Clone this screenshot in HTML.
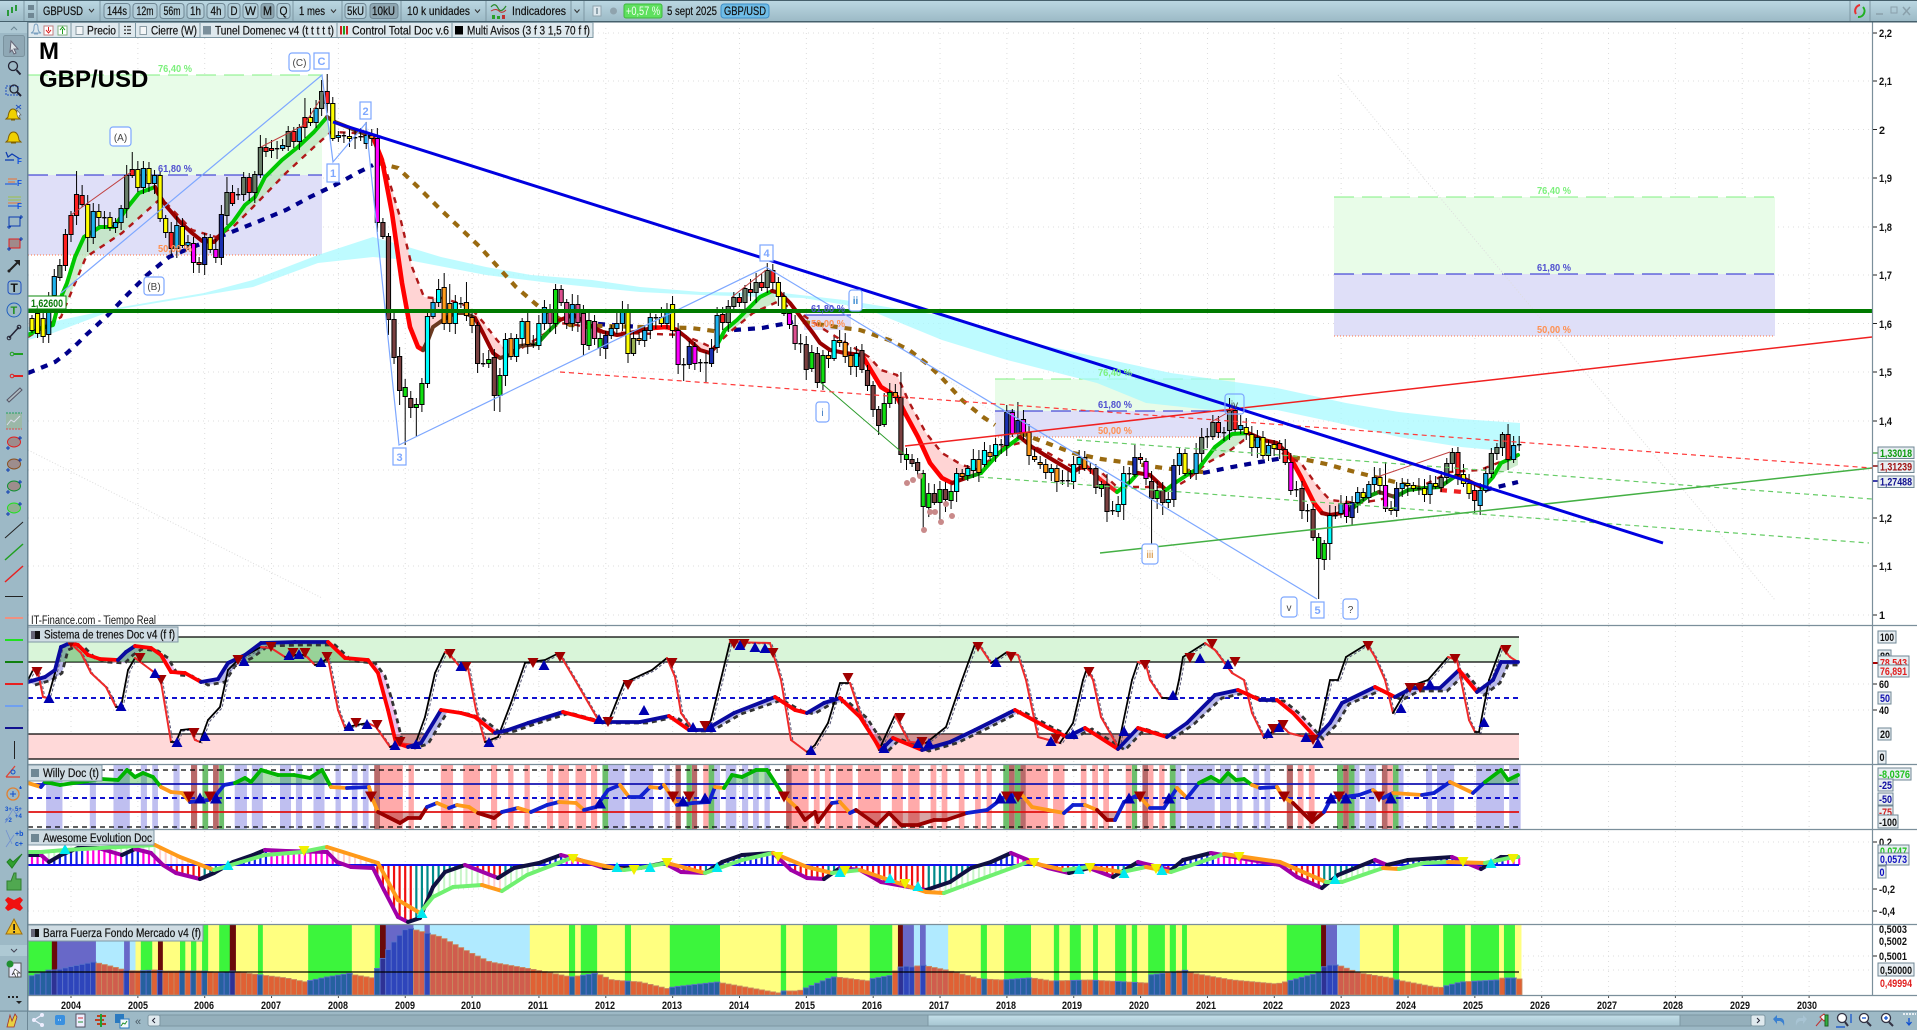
<!DOCTYPE html>
<html lang="es"><head><meta charset="utf-8"><title>GBPUSD</title>
<style>
html,body{margin:0;padding:0;background:#fff;overflow:hidden}
svg{display:block;font-family:"Liberation Sans",sans-serif}
text{fill:#111}
.a{font-size:11px;font-weight:bold;fill:#111}
.t{font-size:12px;fill:#111;stroke:#111;stroke-width:.2}
.l{font-size:11.5px;fill:#111;stroke:#111;stroke-width:.2}
.f{font-size:10px;font-weight:bold}
.bx{fill:#e8eef2;stroke:#6f8794;stroke-width:1}
.btn{fill:#b4cfda;stroke:#6f8794;stroke-width:1}
.on{fill:#8ea6b1;stroke:#6f8794;stroke-width:1}
.sep{stroke:#7d97a3;stroke-width:1}
.chip{fill:#cfdce3;stroke:#8098a4;stroke-width:1}
.lb{fill:#fff;stroke:#7da7ff;stroke-width:1.2}
.lt{font-size:11px;fill:#7da7ff;font-weight:bold;text-anchor:middle}
.ld{font-size:10px;fill:#444;text-anchor:middle}
</style></head><body>
<svg id="s" xmlns="http://www.w3.org/2000/svg" width="1917" height="1030" viewBox="0 0 1917 1030">
<defs>
<linearGradient id="tb" x1="0" y1="0" x2="0" y2="1"><stop offset="0" stop-color="#bcd8e3"/><stop offset="1" stop-color="#9bb9c5"/></linearGradient>
<linearGradient id="th" x1="0" y1="0" x2="0" y2="1"><stop offset="0" stop-color="#c4dfe9"/><stop offset="1" stop-color="#a6c5d1"/></linearGradient>
<clipPath id="cg"><rect x="28" y="764" width="1500" height="20"/></clipPath>
<clipPath id="cr"><rect x="28" y="812" width="1500" height="17"/></clipPath>
</defs>
<rect width="1917" height="1030" fill="#fff"/>
<g id="grid"></g>

<!-- fib boxes -->
<rect x="28" y="75" width="294" height="100" fill="#e8fce8"/><rect x="28" y="175" width="294" height="80" fill="#dfdff8"/>
<line x1="28" x2="322" y1="75" y2="75" stroke="#80f080" stroke-width="1" stroke-dasharray="20 8"/>
<line x1="28" x2="322" y1="175" y2="175" stroke="#2020d0" stroke-width="1" stroke-dasharray="20 8"/>
<line x1="28" x2="322" y1="255" y2="255" stroke="#ff7040" stroke-width="1" stroke-dasharray="1 2"/>
<rect x="804" y="315" width="47" height="15" fill="#dfdff8"/>
<line x1="804" x2="851" y1="315" y2="315" stroke="#2020d0"/>
<rect x="995" y="379" width="240" height="32" fill="#e8fce8"/><rect x="995" y="411" width="240" height="26" fill="#dfdff8"/>
<line x1="995" x2="1235" y1="379" y2="379" stroke="#80f080" stroke-dasharray="20 8"/>
<line x1="995" x2="1235" y1="411" y2="411" stroke="#2020d0" stroke-dasharray="20 8"/>
<line x1="995" x2="1235" y1="437" y2="437" stroke="#ff7040" stroke-dasharray="1 2"/>
<rect x="1334" y="197" width="441" height="77" fill="#e8fce8"/><rect x="1334" y="274" width="441" height="62" fill="#dfdff8"/>
<line x1="1334" x2="1775" y1="197" y2="197" stroke="#80f080" stroke-dasharray="20 8"/>
<line x1="1334" x2="1775" y1="274" y2="274" stroke="#2020d0" stroke-dasharray="20 8"/>
<line x1="1334" x2="1775" y1="336" y2="336" stroke="#ff7040" stroke-dasharray="1 2"/>

<!-- dotted diagonals -->
<line x1="1338" y1="75" x2="1775" y2="600" stroke="#ddd" stroke-dasharray="1 2"/>
<line x1="28" y1="450" x2="322" y2="598" stroke="#ddd" stroke-dasharray="1 2"/>
<line x1="840" y1="300" x2="1220" y2="580" stroke="#e4e4e4" stroke-dasharray="1 2"/>

<!-- cyan band -->
<polygon fill="#a8faff" fill-opacity=".75" points="28,327 122,307 204,293 253,280 318,255 373,237 408,247 441,257 486,267 531,275 592,280 640,287 701,292 783,293 844,300 893,308 938,315 1020,340 1097,357 1171,373 1277,388 1346,403 1399,412 1461,419 1520,423 1520,447 1493,450 1461,447 1399,437 1338,423 1277,410 1211,410 1146,403 1097,383 1007,360 942,340 864,308 803,298 701,295 640,292 551,283 486,275 408,260 373,257 318,263 253,287 114,310 53,333 28,340"/>

<!-- MA fills -->
<g fill="#ffd4d4">
<polygon points="373,137 382,160 392,213 402,283 410,327 418,347 423,350 433,327 443,320 443,298 433,298 424,297 412,267 400,217 382,157"/>
<polygon points="475,318 483,333 493,353 500,358 510,355 497,340 483,322 470,307"/>
<polygon points="660,328 687,338 700,350 710,353 713,348 700,342 683,335"/>
<polygon points="862,355 869,367 881,387 897,397 905,413 918,437 930,463 942,478 952,483 966,478 979,470 962,465 942,453 926,433 909,402 897,375 881,370 869,357"/>
<polygon points="1101,480 1117,492 1117,487 1101,472"/>
<polygon points="1289,455 1301,477 1314,503 1322,513 1330,515 1348,502 1330,500 1318,487 1301,463"/>
</g>
<g fill="#bfe6bf" fill-opacity=".8">
<polygon points="59,302 67,283 75,257 84,237 100,227 114,227 127,208 139,193 155,187 159,200 122,233 86,257 61,317"/>
<polygon points="233,222 245,205 255,197 265,177 282,160 298,147 314,132 327,117 331,132 314,147 286,173 253,207 233,227"/>
<polygon points="725,330 737,320 747,310 760,297 772,291 777,302 753,313 730,332"/>
<polygon points="981,473 999,453 1020,437 1024,442 1003,447 979,470"/>
<polygon points="1215,447 1232,434 1248,433 1244,440 1228,452 1207,463"/>
<polygon points="1501,463 1518,455 1518,465 1493,477"/>
</g>
<!-- long MA dashed -->
<g fill="none" stroke-width="4.2" stroke-dasharray="7 7">
<polyline stroke="#00008c" points="28,373 43,367 55,362 67,353 78,343 86,335 108,315 127,295 147,275 169,257 190,248 229,233 257,222 286,210 310,197 335,185 359,172 373,165"/>
<polyline stroke="#00008c" points="598,324 640,327"/>
<polyline stroke="#00008c" points="734,330 762,328 793,322"/>
<polyline stroke="#00008c" points="1203,473 1232,467 1260,462 1289,457"/>
<polyline stroke="#00008c" points="1485,490 1518,482"/>
<polyline stroke="#9a6a10" points="378,163 398,168 418,187 439,208 459,227 480,247 498,267 516,287 538,306 570,325 640,327 691,328 707,330 720,332"/>
<polyline stroke="#9a6a10" points="803,322 844,328 860,330 889,340 909,350 926,363 942,378 962,400 983,417 995,425"/>
<polyline stroke="#9a6a10" points="1020,433 1044,442 1073,453 1101,459 1130,463 1156,467 1179,470 1203,472"/>
<polyline stroke="#9a6a10" points="1293,457 1326,464 1355,472 1367,475 1395,482 1420,488"/>
<polyline stroke="#ee2222" points="1440,490 1462,492"/>
</g>
<!-- slow MA -->
<g fill="none" stroke="#b01818" stroke-width="2.4" stroke-dasharray="6 6">
<polyline points="28,337 61,317 86,257 122,233 159,200 163,200 192,230 216,237 233,227 253,207 286,173 314,147 331,132 355,133 373,140 382,157 400,217 412,267 424,297 433,298 443,298 470,307 483,322 497,340 510,355 540,337 560,323 577,325 600,332 683,335 700,342 713,348 730,332 753,313 777,302 790,307 800,313 820,327 869,357 881,370 897,375 909,402 926,433 942,453 962,465 979,470 1003,447 1024,442 1048,453 1073,467 1101,472 1117,487 1175,487 1187,480 1207,463 1228,452 1244,440 1264,440 1285,455 1301,463 1318,487 1330,500 1348,502 1358,503 1379,500 1395,495 1420,487 1450,472 1480,470 1518,455"/>
</g>
<g id="fast" fill="none" stroke-linejoin="round" stroke-linecap="round"></g>
<g id="cnd"></g>
<!-- pink dots -->
<g fill="#c98a8a">
<circle cx="907" cy="483" r="3"/><circle cx="913" cy="480" r="3"/><circle cx="920" cy="476" r="3"/><circle cx="924" cy="530" r="3"/><circle cx="930" cy="512" r="3"/><circle cx="935" cy="512" r="3"/><circle cx="941" cy="522" r="3"/><circle cx="946" cy="504" r="3"/><circle cx="952" cy="516" r="3"/>
</g>
<!-- small red lines -->
<g fill="none" stroke="#c04040" stroke-width="1">
<polyline points="71,215 131,172"/><polyline points="261,147 304,125 320,100"/><polyline points="732,297 766,270"/><polyline points="1377,477 1450,452"/><polyline points="1211,422 1236,408"/>
</g>
<!-- trend lines -->
<g fill="none">
<polyline stroke="#7da7ff" stroke-width="1.2" points="61,293 322,75 333,162 366,123 399,445 766,267 1317,599"/>
<line x1="820" y1="382" x2="905" y2="455" stroke="#2a9a2a" stroke-width="1"/>
<line x1="979" y1="477" x2="1869" y2="543" stroke="#66cc66" stroke-width="1.2" stroke-dasharray="5 4"/>
<line x1="1077" y1="440" x2="1872" y2="499" stroke="#66cc66" stroke-width="1.2" stroke-dasharray="5 4"/>
<line x1="1100" y1="553" x2="1872" y2="468" stroke="#44b044" stroke-width="1.5"/>
<line x1="560" y1="372" x2="1872" y2="468" stroke="#ff3a3a" stroke-width="1.2" stroke-dasharray="5 4"/>
<line x1="905" y1="446" x2="1872" y2="337" stroke="#f02020" stroke-width="1.5"/>
<line x1="333" y1="122" x2="1663" y2="543" stroke="#0000e0" stroke-width="3"/>
<rect x="28" y="309" width="1844" height="4" fill="#007a00"/>
</g>
<!-- big text -->
<text x="39" y="59" font-size="24" font-weight="bold" style="fill:#000">M</text>
<text x="39" y="87" font-size="24" font-weight="bold" style="fill:#000">GBP/USD</text>
<!-- fib labels -->
<g class="f">
<text class="f" x="158" y="72" textLength="34" lengthAdjust="spacingAndGlyphs" style="fill:#7cf07c">76,40 %</text>
<text class="f" x="158" y="172" textLength="34" lengthAdjust="spacingAndGlyphs" style="fill:#5050d0">61,80 %</text>
<text class="f" x="158" y="252" textLength="34" lengthAdjust="spacingAndGlyphs" style="fill:#ff9050">50,00 %</text>
<text class="f" x="811" y="312" textLength="34" lengthAdjust="spacingAndGlyphs" style="fill:#5050d0">61,80 %</text>
<text class="f" x="811" y="327" textLength="34" lengthAdjust="spacingAndGlyphs" style="fill:#ff9050">50,00 %</text>
<text class="f" x="1098" y="376" textLength="34" lengthAdjust="spacingAndGlyphs" style="fill:#7cf07c">76,40 %</text>
<text class="f" x="1098" y="408" textLength="34" lengthAdjust="spacingAndGlyphs" style="fill:#5050d0">61,80 %</text>
<text class="f" x="1098" y="434" textLength="34" lengthAdjust="spacingAndGlyphs" style="fill:#ff9050">50,00 %</text>
<text class="f" x="1537" y="194" textLength="34" lengthAdjust="spacingAndGlyphs" style="fill:#7cf07c">76,40 %</text>
<text class="f" x="1537" y="271" textLength="34" lengthAdjust="spacingAndGlyphs" style="fill:#5050d0">61,80 %</text>
<text class="f" x="1537" y="333" textLength="34" lengthAdjust="spacingAndGlyphs" style="fill:#ff9050">50,00 %</text>
</g>
<!-- elliott labels -->
<rect class="lb" x="289" y="53" width="21" height="18" rx="3"/><text class="ld" x="299.5" y="66">(C)</text>
<rect class="lb" x="314" y="53" width="15" height="16"/><text class="lt" x="321.5" y="65">C</text>
<rect class="lb" x="110" y="127" width="21" height="19" rx="3"/><text class="ld" x="120.5" y="141">(A)</text>
<rect class="lb" x="144" y="277" width="20" height="18" rx="3"/><text class="ld" x="154" y="290">(B)</text>
<rect class="lb" x="327" y="164" width="12" height="18"/><text class="lt" x="333" y="177">1</text>
<rect class="lb" x="360" y="102" width="11" height="17"/><text class="lt" x="365.5" y="115">2</text>
<rect class="lb" x="393" y="448" width="13" height="17"/><text class="lt" x="399.5" y="461">3</text>
<rect class="lb" x="760" y="245" width="13" height="16"/><text class="lt" x="766.5" y="257">4</text>
<rect class="lb" x="1311" y="602" width="13" height="16"/><text class="lt" x="1317.5" y="614">5</text>
<rect class="lb" x="849" y="290" width="13" height="21" rx="3"/><text class="lt" x="855.5" y="304" style="font-size:10px;fill:#3a8ad0">ii</text>
<rect class="lb" x="816" y="402" width="13" height="20" rx="3"/><text class="ld" x="822.5" y="416" style="fill:#3a7ac0">i</text>
<rect class="lb" x="1142" y="544" width="16" height="20" rx="3"/><text class="ld" x="1150" y="558" style="fill:#d08020">iii</text>
<rect class="lb" x="1225" y="394" width="19" height="20" rx="3" style="fill:none"/><text class="ld" x="1234.5" y="408">iv</text>
<rect class="lb" x="1281" y="597" width="16" height="20" rx="3"/><text class="ld" x="1289" y="611">v</text>
<rect class="lb" x="1343" y="599" width="15" height="20" rx="3"/><text class="ld" x="1350.5" y="613">?</text>
<!-- 1,62600 tag -->
<rect x="28" y="296" width="38" height="13" fill="#fff" stroke="#0a8a0a"/><text x="31" y="307" class="a" textLength="32" lengthAdjust="spacingAndGlyphs" style="fill:#0a7a0a">1,62600</text>
<text x="31" y="624" font-size="11.5" textLength="125" lengthAdjust="spacingAndGlyphs">IT-Finance.com - Tiempo Real</text>

<!-- sub panels -->
<rect x="28" y="625.5" width="1845" height="370" fill="#fff"/>
<g id="grid2"></g>
<rect x="28" y="637" width="1491" height="25" fill="#d9f5d9"/>
<rect x="28" y="734" width="1491" height="25" fill="#ffd9d9"/>
<g id="sys"></g>
<g id="wil"></g>
<g id="awe"></g>
<g id="bar"></g>

<!-- panel separators + axis -->
<g stroke="#7b8f9b" stroke-width="1.2">
<line x1="28" x2="1917" y1="625.5" y2="625.5"/><line x1="28" x2="1917" y1="764.5" y2="764.5"/><line x1="28" x2="1917" y1="829.5" y2="829.5"/><line x1="28" x2="1917" y1="924.5" y2="924.5"/><line x1="28" x2="1917" y1="995.5" y2="995.5"/><line x1="1872.5" x2="1872.5" y1="22" y2="995"/>
</g>
<!-- years -->
<g class="a" id="yrs">
<text class="a" x="61" y="1009" textLength="20" lengthAdjust="spacingAndGlyphs">2004</text>
<text class="a" x="128" y="1009" textLength="20" lengthAdjust="spacingAndGlyphs">2005</text>
<text class="a" x="194" y="1009" textLength="20" lengthAdjust="spacingAndGlyphs">2006</text>
<text class="a" x="261" y="1009" textLength="20" lengthAdjust="spacingAndGlyphs">2007</text>
<text class="a" x="328" y="1009" textLength="20" lengthAdjust="spacingAndGlyphs">2008</text>
<text class="a" x="395" y="1009" textLength="20" lengthAdjust="spacingAndGlyphs">2009</text>
<text class="a" x="461" y="1009" textLength="20" lengthAdjust="spacingAndGlyphs">2010</text>
<text class="a" x="528" y="1009" textLength="20" lengthAdjust="spacingAndGlyphs">2011</text>
<text class="a" x="595" y="1009" textLength="20" lengthAdjust="spacingAndGlyphs">2012</text>
<text class="a" x="662" y="1009" textLength="20" lengthAdjust="spacingAndGlyphs">2013</text>
<text class="a" x="729" y="1009" textLength="20" lengthAdjust="spacingAndGlyphs">2014</text>
<text class="a" x="795" y="1009" textLength="20" lengthAdjust="spacingAndGlyphs">2015</text>
<text class="a" x="862" y="1009" textLength="20" lengthAdjust="spacingAndGlyphs">2016</text>
<text class="a" x="929" y="1009" textLength="20" lengthAdjust="spacingAndGlyphs">2017</text>
<text class="a" x="996" y="1009" textLength="20" lengthAdjust="spacingAndGlyphs">2018</text>
<text class="a" x="1062" y="1009" textLength="20" lengthAdjust="spacingAndGlyphs">2019</text>
<text class="a" x="1129" y="1009" textLength="20" lengthAdjust="spacingAndGlyphs">2020</text>
<text class="a" x="1196" y="1009" textLength="20" lengthAdjust="spacingAndGlyphs">2021</text>
<text class="a" x="1263" y="1009" textLength="20" lengthAdjust="spacingAndGlyphs">2022</text>
<text class="a" x="1330" y="1009" textLength="20" lengthAdjust="spacingAndGlyphs">2023</text>
<text class="a" x="1396" y="1009" textLength="20" lengthAdjust="spacingAndGlyphs">2024</text>
<text class="a" x="1463" y="1009" textLength="20" lengthAdjust="spacingAndGlyphs">2025</text>
<text class="a" x="1530" y="1009" textLength="20" lengthAdjust="spacingAndGlyphs">2026</text>
<text class="a" x="1597" y="1009" textLength="20" lengthAdjust="spacingAndGlyphs">2027</text>
<text class="a" x="1663" y="1009" textLength="20" lengthAdjust="spacingAndGlyphs">2028</text>
<text class="a" x="1730" y="1009" textLength="20" lengthAdjust="spacingAndGlyphs">2029</text>
<text class="a" x="1797" y="1009" textLength="20" lengthAdjust="spacingAndGlyphs">2030</text>
</g>
<!-- axis labels -->
<g stroke="#222" stroke-width="1" id="ticks">
<path d="M1873 33h4M1873 81h4M1873 129.5h4M1873 178h4M1873 227h4M1873 275h4M1873 323.5h4M1873 372h4M1873 421h4M1873 518h4M1873 566h4M1873 615h4M1873 684h4M1873 710h4M1873 842h4M1873 889h4M1873 911h4M1873 956h4"/>
</g>
<g>
<text class="a" x="1879" y="37" textLength="13" lengthAdjust="spacingAndGlyphs">2,2</text>
<text class="a" x="1879" y="85" textLength="13" lengthAdjust="spacingAndGlyphs">2,1</text>
<text class="a" x="1879" y="134" textLength="6" lengthAdjust="spacingAndGlyphs">2</text>
<text class="a" x="1879" y="182" textLength="13" lengthAdjust="spacingAndGlyphs">1,9</text>
<text class="a" x="1879" y="231" textLength="13" lengthAdjust="spacingAndGlyphs">1,8</text>
<text class="a" x="1879" y="279" textLength="13" lengthAdjust="spacingAndGlyphs">1,7</text>
<text class="a" x="1879" y="328" textLength="13" lengthAdjust="spacingAndGlyphs">1,6</text>
<text class="a" x="1879" y="376" textLength="13" lengthAdjust="spacingAndGlyphs">1,5</text>
<text class="a" x="1879" y="425" textLength="13" lengthAdjust="spacingAndGlyphs">1,4</text>
<text class="a" x="1879" y="522" textLength="13" lengthAdjust="spacingAndGlyphs">1,2</text>
<text class="a" x="1879" y="570" textLength="13" lengthAdjust="spacingAndGlyphs">1,1</text>
<text class="a" x="1879" y="619" textLength="6" lengthAdjust="spacingAndGlyphs">1</text>

<path d="M1873 453h5" stroke="#0a8a0a"/><path d="M1873 466h5" stroke="#8a0a0a" stroke-width="1.5"/><path d="M1873 481h5" stroke="#000090" stroke-width="1.5"/>
<rect class="bx" x="1878" y="447" width="36" height="11.5"/><text class="a" x="1880" y="457" textLength="32" lengthAdjust="spacingAndGlyphs" style="fill:#0a9a0a">1,33018</text>
<rect class="bx" x="1878" y="461" width="36" height="11.5"/><text class="a" x="1880" y="470.5" textLength="32" lengthAdjust="spacingAndGlyphs" style="fill:#a01010">1,31239</text>
<rect class="bx" x="1878" y="476" width="36" height="11.5"/><text class="a" x="1880" y="485.5" textLength="32" lengthAdjust="spacingAndGlyphs" style="fill:#101090">1,27488</text>

<rect class="bx" x="1878" y="631" width="18" height="12"/><text class="a" x="1880" y="641" textLength="14" lengthAdjust="spacingAndGlyphs">100</text>
<rect class="bx" x="1878" y="650" width="13" height="12"/><text class="a" x="1880" y="660" textLength="10" lengthAdjust="spacingAndGlyphs">80</text>
<path d="M1873 663h5" stroke="#a00" stroke-width="2"/>
<rect class="bx" x="1878" y="656" width="31" height="12"/><text class="a" x="1880" y="666.5" textLength="27" lengthAdjust="spacingAndGlyphs" style="fill:#e02020">78,543</text>
<rect class="bx" x="1878" y="665" width="31" height="12"/><text class="a" x="1880" y="675" textLength="27" lengthAdjust="spacingAndGlyphs" style="fill:#e02020">76,891</text>
<text class="a" x="1879" y="688" textLength="10" lengthAdjust="spacingAndGlyphs">60</text>
<rect class="bx" x="1878" y="692" width="13" height="12"/><text class="a" x="1880" y="702" textLength="10" lengthAdjust="spacingAndGlyphs" style="fill:#1010b0">50</text>
<text class="a" x="1879" y="714" textLength="10" lengthAdjust="spacingAndGlyphs">40</text>
<rect class="bx" x="1878" y="728" width="13" height="12"/><text class="a" x="1880" y="738" textLength="10" lengthAdjust="spacingAndGlyphs">20</text>
<rect class="bx" x="1878" y="751" width="8" height="13"/><text class="a" x="1879.5" y="761" textLength="5" lengthAdjust="spacingAndGlyphs">0</text>

<rect class="bx" x="1878" y="768" width="33" height="12"/><text class="a" x="1879" y="778" textLength="31" lengthAdjust="spacingAndGlyphs" style="fill:#20c020">-8,0376</text>
<rect class="bx" x="1878" y="779" width="15" height="12"/><text class="a" x="1879" y="789" textLength="13" lengthAdjust="spacingAndGlyphs" style="fill:#1010a0">-25</text>
<rect class="bx" x="1878" y="793" width="15" height="12"/><text class="a" x="1879" y="803" textLength="13" lengthAdjust="spacingAndGlyphs" style="fill:#1010a0">-50</text>
<rect class="bx" x="1878" y="806" width="15" height="12"/><text class="a" x="1879" y="816" textLength="13" lengthAdjust="spacingAndGlyphs" style="fill:#d02020">-75</text>
<rect class="bx" x="1878" y="815" width="20" height="13"/><text class="a" x="1879" y="826" textLength="18" lengthAdjust="spacingAndGlyphs">-100</text>

<text class="a" x="1879" y="846" textLength="13" lengthAdjust="spacingAndGlyphs">0,2</text>
<rect class="bx" x="1878" y="845" width="31" height="11"/><text class="a" x="1880" y="855" textLength="27" lengthAdjust="spacingAndGlyphs" style="fill:#20c020">0,0747</text>
<rect class="bx" x="1878" y="853" width="31" height="12"/><text class="a" x="1880" y="863" textLength="27" lengthAdjust="spacingAndGlyphs" style="fill:#1010c0">0,0573</text>
<rect class="bx" x="1878" y="866" width="8" height="12"/><text class="a" x="1879.5" y="876" textLength="5" lengthAdjust="spacingAndGlyphs" style="fill:#1010c0">0</text>
<text class="a" x="1879" y="893" textLength="16" lengthAdjust="spacingAndGlyphs">-0,2</text>
<text class="a" x="1879" y="915" textLength="16" lengthAdjust="spacingAndGlyphs">-0,4</text>

<text class="a" x="1879" y="933" textLength="28" lengthAdjust="spacingAndGlyphs">0,5003</text>
<text class="a" x="1879" y="945" textLength="28" lengthAdjust="spacingAndGlyphs">0,5002</text>
<text class="a" x="1879" y="960" textLength="28" lengthAdjust="spacingAndGlyphs">0,5001</text>
<rect class="bx" x="1878" y="963" width="36" height="13"/><text class="a" x="1880" y="974" textLength="32" lengthAdjust="spacingAndGlyphs">0,50000</text>
<text class="a" x="1880" y="987" textLength="32" lengthAdjust="spacingAndGlyphs" style="fill:#e02020">0,49994</text>
</g>

<!-- panel chips -->
<rect class="chip" x="28" y="627" width="150" height="15"/><rect x="31" y="631" width="4" height="8" fill="#667"/><rect x="35" y="631" width="5" height="8" fill="#111"/>
<text class="l" x="44" y="638.5" textLength="131" lengthAdjust="spacingAndGlyphs">Sistema de trenes Doc v4 (f f)</text>
<rect class="chip" x="28" y="765" width="74" height="16"/><rect x="31" y="769" width="8" height="8" fill="#6f8794"/>
<text class="l" x="43" y="777" textLength="56" lengthAdjust="spacingAndGlyphs">Willy Doc (t)</text>
<rect class="chip" x="28" y="830" width="126" height="15"/><rect x="31" y="834" width="8" height="8" fill="#6f8794"/>
<text class="l" x="43" y="842" textLength="109" lengthAdjust="spacingAndGlyphs">Awesome Evolution Doc</text>
<rect class="chip" x="28" y="925" width="175" height="16"/><rect x="31" y="929" width="4" height="8" fill="#667"/><rect x="35" y="929" width="4" height="8" fill="#111"/>
<text class="l" x="43" y="937" textLength="158" lengthAdjust="spacingAndGlyphs">Barra Fuerza Fondo Mercado v4 (f)</text>

<!-- top toolbar -->
<rect x="0" y="0" width="1917" height="22" fill="url(#tb)"/>
<rect x="0" y="0" width="1917" height="1" fill="#46606c"/><rect x="0" y="21" width="1917" height="1.5" fill="#46606c"/>
<g fill="#2a9a3a"><rect x="7" y="10" width="2" height="6"/><rect x="11" y="7" width="2" height="6"/><rect x="15" y="5" width="2" height="6"/></g>
<path class="sep" d="M24 1V21"/>
<g fill="#6f8794"><rect x="28" y="5" width="6" height="5"/><rect x="28" y="13" width="6" height="5"/></g>
<path class="sep" d="M37 1V21"/>
<text class="t" x="43" y="15" textLength="40" lengthAdjust="spacingAndGlyphs">GBPUSD</text>
<path d="M89 9l2.5 3 2.5-3" fill="none" stroke="#333"/>
<path class="sep" d="M100 1V21"/>
<rect class="btn" x="104" y="3.5" width="26" height="15" rx="3"/><text class="t" x="107" y="15" textLength="20" lengthAdjust="spacingAndGlyphs">144s</text>
<rect class="btn" x="133" y="3.5" width="24" height="15" rx="3"/><text class="t" x="136.5" y="15" textLength="17" lengthAdjust="spacingAndGlyphs">12m</text>
<rect class="btn" x="160" y="3.5" width="24" height="15" rx="3"/><text class="t" x="163.5" y="15" textLength="17" lengthAdjust="spacingAndGlyphs">56m</text>
<rect class="btn" x="187" y="3.5" width="17" height="15" rx="3"/><text class="t" x="190" y="15" textLength="11" lengthAdjust="spacingAndGlyphs">1h</text>
<rect class="btn" x="207" y="3.5" width="18" height="15" rx="3"/><text class="t" x="210.5" y="15" textLength="11" lengthAdjust="spacingAndGlyphs">4h</text>
<rect class="btn" x="228" y="3.5" width="12" height="15" rx="3"/><text class="t" x="230.5" y="15" textLength="7" lengthAdjust="spacingAndGlyphs">D</text>
<rect class="btn" x="243" y="3.5" width="15" height="15" rx="3"/><text class="t" x="245" y="15" textLength="11" lengthAdjust="spacingAndGlyphs">W</text>
<rect class="on" x="261" y="3.5" width="13" height="15" rx="3"/><text class="t" x="263" y="15" textLength="9" lengthAdjust="spacingAndGlyphs">M</text>
<rect class="btn" x="277" y="3.5" width="13" height="15" rx="3"/><text class="t" x="279.5" y="15" textLength="8" lengthAdjust="spacingAndGlyphs">Q</text>
<path class="sep" d="M293 1V21"/>
<text class="t" x="299" y="15" textLength="26" lengthAdjust="spacingAndGlyphs">1 mes</text>
<path d="M331 9.5l2.5 3 2.5-3" fill="none" stroke="#333"/>
<path class="sep" d="M342 1V21"/>
<rect class="btn" x="345" y="3.5" width="21" height="15" rx="3"/><text class="t" x="347" y="15" textLength="17" lengthAdjust="spacingAndGlyphs">5kU</text>
<rect class="on" x="370" y="3.5" width="28" height="15" rx="3"/><text class="t" x="372" y="15" textLength="23" lengthAdjust="spacingAndGlyphs">10kU</text>
<path class="sep" d="M401 1V21"/>
<text class="t" x="407" y="15" textLength="63" lengthAdjust="spacingAndGlyphs">10 k unidades</text>
<path d="M475 9.5l2.5 3 2.5-3" fill="none" stroke="#333"/>
<path class="sep" d="M486 1V21"/>
<path d="M491 7q4-5 7 1t8-2" fill="none" stroke="#2a8a2a" stroke-width="1.2"/><path d="M491 11q5-3 8 0t7-1" fill="none" stroke="#c03030" stroke-width="1"/>
<g fill="#2aa02a"><rect x="492" y="15" width="3" height="4"/><rect x="497" y="16" width="3" height="3"/></g><rect x="502" y="15" width="3" height="4" fill="#c03030"/>
<text class="t" x="512" y="15" textLength="54" lengthAdjust="spacingAndGlyphs">Indicadores</text>
<path class="sep" d="M571 1V21"/><path d="M574.5 9.5l2.5 3 2.5-3" fill="none" stroke="#333"/><path class="sep" d="M584 1V21"/>
<rect x="593" y="6" width="8" height="10" fill="#dde8ee" stroke="#8fa3ad"/><rect x="596" y="8" width="2" height="6" fill="#8fa3ad"/>
<circle cx="613.5" cy="11" r="3.5" fill="#8fa3ad"/>
<rect x="624" y="4" width="38" height="14" rx="2" fill="#5fe05f" stroke="#3fb83f"/>
<text class="t" x="626" y="15" textLength="34" lengthAdjust="spacingAndGlyphs" style="fill:#f4fff4;stroke:none">+0,57 %</text>
<text class="t" x="667" y="15" textLength="50" lengthAdjust="spacingAndGlyphs">5 sept 2025</text>
<rect x="721" y="4" width="48" height="14" rx="3" fill="#6fbce6" stroke="#3f8fc8"/>
<text class="t" x="724" y="15" textLength="42" lengthAdjust="spacingAndGlyphs">GBP/USD</text>
<path class="sep" d="M1850 1V21M1870 1V21"/>
<path d="M1860 5a6 6 0 0 0-4 9" fill="none" stroke="#e83030" stroke-width="2"/><path d="M1858 17a6 6 0 0 0 5-10" fill="none" stroke="#20b020" stroke-width="2"/>
<path d="M1876 14h7" stroke="#8aa0ab" stroke-width="1.5"/><rect x="1891" y="7" width="6" height="6" fill="none" stroke="#8aa0ab"/><path d="M1903 7l7 8M1910 7l-7 8" stroke="#8aa0ab" stroke-width="1.5"/>

<!-- legend row -->
<rect x="28" y="22.5" width="565" height="15" fill="#dfe9ee" stroke="#7d97a3" stroke-width="1"/>
<path d="M31 33q3-1 3-5t2-4 2 4 3 5zM34 34h4" fill="none" stroke="#7aa0c0"/>
<rect x="44" y="26" width="9" height="9" fill="#fff" stroke="#c08080"/><path d="M48.5 27v4M46 30l2.5 3 2.5-3" stroke="#e02020" fill="none"/>
<rect x="58" y="26" width="9" height="9" fill="#fff" stroke="#80b080"/><path d="M62.5 34v-5M60 30l2.5-3 2.5 3" stroke="#20a020" fill="none"/>
<path class="sep" d="M71 23V37M119 23V37M135.5 23V37M200 23V37M337 23V37M452 23V37"/>
<rect x="76" y="26.5" width="7" height="8" fill="#f4f6f7" stroke="#8a9aa3"/>
<text class="l" x="87" y="34.5" textLength="29" lengthAdjust="spacingAndGlyphs">Precio</text>
<path d="M124 26.5h2M127 26.5h4M124 30h2M127 30h4M124 33.5h2M127 33.5h4" stroke="#333" stroke-width="1.2"/>
<rect x="140" y="26.5" width="6.5" height="8" fill="#f4f6f7" stroke="#8a9aa3"/>
<text class="l" x="151" y="34.5" textLength="46" lengthAdjust="spacingAndGlyphs">Cierre (W)</text>
<rect x="203" y="26" width="8" height="8.5" fill="#7b8f9b"/>
<text class="l" x="215" y="34.5" textLength="119" lengthAdjust="spacingAndGlyphs">Tunel Domenec v4 (t t t t t)</text>
<rect x="340" y="26" width="2" height="8.5" fill="#d02020"/><rect x="343" y="26" width="2" height="8.5" fill="#20a020"/><rect x="346" y="26" width="2" height="8.5" fill="#d02020"/>
<text class="l" x="352" y="34.5" textLength="97" lengthAdjust="spacingAndGlyphs">Control Total Doc v.6</text>
<rect x="455" y="26" width="8" height="8.5" fill="#000"/>
<text class="l" x="467" y="34.5" textLength="123" lengthAdjust="spacingAndGlyphs">Multi Avisos (3 f 3 1,5 70 f f)</text>

<!-- left toolbar -->
<rect x="0" y="22" width="28" height="1008" fill="#9db9c6"/><rect x="27" y="22" width="1.5" height="1008" fill="#6c8795"/>
<rect x="0" y="22" width="27" height="11" fill="#aec9d4"/><path d="M11 30l3-3 3 3" fill="none" stroke="#6c8795"/>
<rect x="3.5" y="35.5" width="21" height="21" rx="2" fill="#8fa8b5" stroke="#7a929e"/>
<path d="M11 41l7 8h-4l2 4-2 1-2-4-2 2z" fill="#dfe6ea" stroke="#667"/>
<g fill="none" stroke="#223">
<circle cx="13" cy="66" r="4.5" stroke-width="1.3"/><path d="M16.5 70l4 4.5" stroke-width="2"/>
<rect x="6" y="86" width="12" height="9" stroke="#2050c0" stroke-dasharray="2 1"/><circle cx="14" cy="89" r="4" stroke-width="1.3"/><path d="M17 92l4 4" stroke-width="2"/>
</g>
<path d="M8 117q1-8 5-8t5 8l2 2H6zM11 120h4" fill="#f0d000" stroke="#806000"/><path d="M16 105l5 4M21 105l-5 4" stroke="#2050c0"/><path d="M17 110l4 5-2 0 1 3-1 0-2-3z" fill="#fff" stroke="#555" stroke-width=".6"/>
<path d="M8 140q1-8 5.5-8t5.5 8l2 2H6zM11 143h5" fill="#f0d000" stroke="#806000"/>
<path d="M6 152l2 5 4-3 8 5M5 160h9" fill="none" stroke="#0a3ab0" stroke-width="1.2"/><text x="17" y="164" font-size="8" font-weight="bold" style="fill:#1050e0">F</text>
<path d="M8 179h9M8 182h7" stroke="#e08050" stroke-width="1.2"/><path d="M5 184h12" stroke="#1050e0"/><text x="17" y="186" font-size="8" font-weight="bold" style="fill:#1050e0">F</text>
<path d="M8 197h13M8 200h13" stroke="#a0c060" stroke-width="1.2"/><path d="M8 203h13" stroke="#e08050" stroke-width="1.2"/><path d="M8 206h10" stroke="#1050e0"/><text x="17" y="209" font-size="8" font-weight="bold" style="fill:#1050e0">F</text>
<rect x="9" y="217" width="11" height="9" fill="none" stroke="#0a3ab0"/><path d="M7 227h4M9 225v4M19 217h4M21 215v4" stroke="#0a3ab0"/>
<rect x="9" y="239" width="11" height="9" fill="#a08a8a" stroke="#e02020"/><path d="M7 249h4M9 247v4M19 239h4M21 237v4" stroke="#0a3ab0"/>
<path d="M9 271l10-10" stroke="#222" stroke-width="2"/><path d="M14 260h6v6z" fill="#222"/><circle cx="9" cy="271" r="1.5" fill="#222"/>
<rect x="8" y="281" width="13" height="13" rx="3" fill="none" stroke="#2050c0"/><text x="10.5" y="292" font-size="12" font-weight="bold" style="fill:#111">T</text>
<circle cx="14" cy="310" r="7" fill="none" stroke="#2060c0"/><text x="10.5" y="314" font-size="11" font-weight="bold" style="fill:#209020">T</text>
<path d="M9 338l10-11" stroke="#223" stroke-width="1.5"/><circle cx="9" cy="338" r="1.8" fill="none" stroke="#223"/><circle cx="19" cy="327" r="1.8" fill="none" stroke="#223"/>
<path d="M11 354h12" stroke="#20a020" stroke-width="2"/><circle cx="12" cy="354" r="1.8" fill="#9db9c6" stroke="#20a020"/>
<path d="M11 376h12" stroke="#e02020" stroke-width="2"/><circle cx="12" cy="376" r="1.8" fill="#9db9c6" stroke="#e02020"/>
<path d="M7 400l13-12 2 2-13 12z" fill="#b0bcc2" stroke="#556"/>
<rect x="6" y="413" width="16" height="16" fill="#9bb8a8" /><path d="M6 413h16" stroke="#20a060" stroke-dasharray="2 1"/><path d="M6 429h16" stroke="#e05050" stroke-dasharray="2 1"/><path d="M7 425l4-5 3 2 6-6" stroke="#dde" fill="none"/>
<g fill="#9d8d8d"><ellipse cx="14" cy="442" rx="6.5" ry="5" stroke="#e02020"/><ellipse cx="14" cy="464" rx="6.5" ry="5" stroke="#8a5020"/><ellipse cx="14" cy="486" rx="6.5" ry="5" stroke="#109030"/><ellipse cx="14" cy="508" rx="6.5" ry="5" stroke="#20e020" fill="#90b090"/></g>
<path d="M6 448h4M8 446v4M18 438h4M20 436v4M6 470h4M8 468v4M18 460h4M20 458v4M6 492h4M8 490v4M18 482h4M20 480v4M6 514h4M8 512v4M18 504h4M20 502v4" stroke="#0a3ab0"/>
<path d="M5 538l18-16" stroke="#222"/><path d="M5 560l18-16" stroke="#20a020" stroke-width="1.5"/><path d="M5 582l18-16" stroke="#e82020" stroke-width="1.5"/>
<path d="M5 596.5h18" stroke="#222"/><path d="M5 618h18" stroke="#f09080" stroke-width="2"/><path d="M5 640h18" stroke="#20e020" stroke-width="2"/><path d="M5 662h18" stroke="#108010" stroke-width="2"/>
<path d="M5 684h18" stroke="#e82020" stroke-width="2"/><path d="M5 706h18" stroke="#70a0f0" stroke-width="2"/><path d="M5 728h18" stroke="#101090" stroke-width="2"/><path d="M14.5 741v18" stroke="#222"/>
<path d="M6 777l9-11M6 777h14" fill="none" stroke="#e04030" stroke-width="1.2"/><circle cx="13" cy="772" r="2" fill="none" stroke="#1050d0"/>
<circle cx="13" cy="794" r="6" fill="none" stroke="#e08030" stroke-width="1.3"/><path d="M10 794h6M13 791v6M19 788h3M20.5 786v3" stroke="#1050d0"/>
<text x="5" y="811" font-size="6" style="fill:#1050d0" font-weight="bold">3+</text><text x="15" y="811" font-size="6" style="fill:#1050d0" font-weight="bold">5+</text><text x="5" y="822" font-size="6" style="fill:#1050d0" font-weight="bold">+2</text><text x="15" y="818" font-size="6" style="fill:#1050d0" font-weight="bold">+4</text><path d="M5 823l8-14 3 5 6-6" fill="none" stroke="#7090d0" stroke-width=".8"/>
<text x="15" y="836" font-size="7" style="fill:#1050d0" font-weight="bold">+b</text><text x="15" y="846" font-size="7" style="fill:#1050d0" font-weight="bold">c+</text><path d="M6 830l6 14M6 847l8-12" stroke="#7090d0" stroke-width=".8"/>
<path d="M7 862l5 6 10-14-9 8-3-3z" fill="#30a030" stroke="#208020"/>
<path d="M7 890v-9h4l3-8h2v6h5v11z" fill="#50a850" stroke="#2f7f2f"/>
<path d="M8 897l6 3 6-3 3 3-3 4 3 4-3 3-6-3-6 3-3-3 3-4-3-4z" fill="#f01010"/>
<path d="M14 919l8 15H6z" fill="#f0c020" stroke="#a07010"/><rect x="13.2" y="924" width="1.8" height="6" fill="#222"/><rect x="13.2" y="931" width="1.8" height="2" fill="#222"/>
<rect x="0" y="945" width="27" height="11" fill="#aec9d4"/><path d="M11 949l3 3 3-3" fill="none" stroke="#445"/>
<rect x="9" y="963" width="12" height="14" fill="#eef" stroke="#555"/><circle cx="10" cy="964" r="3.5" fill="#209030"/><path d="M15 969l5 4-3 0 1 4-2 0-2-4-2 2z" fill="#fff" stroke="#333" stroke-width=".7"/>
<path d="M8 997h2M12 997h2M16 997h2" stroke="#222" stroke-width="2"/><path d="M16 1001l3 3 3-3z" fill="#222"/>
<!-- bottom bar -->
<rect x="0" y="1011" width="1917" height="19" fill="#9db9c6"/><rect x="0" y="1010.5" width="1917" height="1.2" fill="#6c8795"/>
<path d="M27.5 1011V1030" stroke="#6c8795"/>
<path d="M7 1027l3-12 2 6 3-7 2 3-3 10z" fill="#e8d040" stroke="#a03030" stroke-width=".8"/>
<path d="M34 1020l8-5M34 1020l8 5" stroke="#eef" stroke-width="1.3"/><circle cx="34" cy="1020" r="2" fill="#eef"/><circle cx="42" cy="1015" r="2" fill="#eef"/><circle cx="42" cy="1025" r="2" fill="#eef"/>
<rect x="55" y="1015" width="10" height="10" rx="2" fill="#3a90e0"/><path d="M58 1020h4" stroke="#fff" stroke-dasharray="1 1"/>
<rect x="76" y="1014" width="9" height="13" fill="#eef" stroke="#556"/><path d="M78 1018h5" stroke="#d03030"/><path d="M78 1022h5" stroke="#209030"/>
<path d="M97 1016h9M95 1020h9M97 1024h9" stroke="#c04020" stroke-width="2"/><path d="M101 1014v13" stroke="#20a030" stroke-width="2"/>
<rect x="115" y="1014" width="9" height="9" fill="#2a7ac0"/><rect x="120" y="1019" width="9" height="9" fill="#f4f8fa" stroke="#2a7ac0"/><path d="M121 1026l2-3 2 1 2-3" stroke="#209030" fill="none"/>
<text x="135" y="1025" font-size="11" style="fill:#4a5a64">«</text>
<rect x="148" y="1015" width="12" height="11" rx="2" fill="#dfe9ee" stroke="#7d97a3"/><path d="M155 1018l-2.5 2.5 2.5 2.5" fill="none" stroke="#223"/>
<rect x="160" y="1015" width="1591" height="11" fill="#94afbb" stroke="#7d97a3"/>
<rect x="928" y="1015" width="752" height="11" fill="url(#th)" stroke="#7d97a3"/>
<rect x="1751" y="1015" width="14" height="11" rx="2" fill="#dfe9ee" stroke="#7d97a3"/><path d="M1757 1018l2.5 2.5-2.5 2.5" fill="none" stroke="#223"/>
<path d="M1773 1019l4-4v3h4q4 1 3 8-1-4-4-5h-3v3z" fill="#3a80d0"/>
<path d="M1807 1019l-4-4v3h-4q-4 1-3 8 1-4 4-5h3v3z" fill="#a8c4d4"/>
<path d="M1816 1026l6-7M1820 1017l4-3 3 3-3 4z" fill="#f4f4f4" stroke="#c03030"/><rect x="1825" y="1015" width="3" height="11" fill="#30b040" stroke="#206020"/>
<circle cx="1842" cy="1018" r="4.5" fill="#fff" stroke="#334" stroke-width="1.3"/><path d="M1845 1022l3 4" stroke="#334" stroke-width="2"/><path d="M1851 1014v9M1836 1027h9" stroke="#1050d0" stroke-width="1.2"/>
<circle cx="1864" cy="1018" r="4.5" fill="#fff" stroke="#334" stroke-width="1.3"/><path d="M1867 1022l4 4" stroke="#334" stroke-width="2"/><path d="M1862 1018h4" stroke="#1050d0" stroke-width="1.3"/>
<circle cx="1886" cy="1018" r="4.5" fill="#fff" stroke="#334" stroke-width="1.3"/><path d="M1889 1022l4 4" stroke="#334" stroke-width="2"/><path d="M1884 1018h4M1886 1016v4" stroke="#1050d0" stroke-width="1.3"/>
<path d="M1903 1014h13" stroke="#e8eef2" stroke-width="2" stroke-dasharray="2 1"/><path d="M1909 1018v6M1906.5 1022l2.5 3 2.5-3" stroke="#1050d0" fill="none" stroke-width="1.3"/>
</svg>
<script>
(function(){
var NS='http://www.w3.org/2000/svg';
function g(i){return document.getElementById(i)}
function E(p,t,a){var e=document.createElementNS(NS,t);for(var k in a)e.setAttribute(k,a[k]);p.appendChild(e);return e}
function P(s){return s.trim().split(/\s+/).map(function(v){var a=v.split(',');return[+a[0],+a[1]]})}
function S(a){return a.map(function(p){return p[0]+','+p[1]}).join(' ')}
function I(a,x){if(x<=a[0][0])return a[0][1];for(var i=1;i<a.length;i++)if(x<=a[i][0]){var r=(x-a[i-1][0])/((a[i][0]-a[i-1][0])||1);return a[i-1][1]+r*(a[i][1]-a[i-1][1])}return a[a.length-1][1]}
var X=function(i){return 32+5.57*i};
/* grid */
var gr=g('grid'),gr2=g('grid2');
[33,81,129.5,178,227,275,323.5,372,421,470,518,566,615].forEach(function(y){E(gr,'line',{x1:28,x2:1872,y1:y,y2:y,stroke:'#dcdcdc','stroke-dasharray':'1 4'})});
for(var yr=0;yr<27;yr++){var x=71+66.85*yr;E(gr,'line',{x1:x,x2:x,y1:28,y2:625,stroke:'#dcdcdc','stroke-dasharray':'1 4'});E(gr2,'line',{x1:x,x2:x,y1:626,y2:995,stroke:'#dcdcdc','stroke-dasharray':'1 4'});E(gr2,'line',{x1:x,x2:x,y1:995,y2:998,stroke:'#444'})}
[684,710,842,889,911,956,970].forEach(function(y){E(gr2,'line',{x1:28,x2:1872,y1:y,y2:y,stroke:'#dcdcdc','stroke-dasharray':'1 4'})});
/* fast MA */
var GR='#00c800',DG='#0a9a0a',DR='#990000',RD='#ff0000',BR='#6b3a20';
[[GR,'28,335 41,328 53,325 59,302 67,283 75,257 84,237 100,227 114,227 127,208 139,193 155,187'],
[DR,'155,187 157,192 167,207 180,222 192,233 202,241 214,242 222,233'],
[GR,'222,233 233,222 245,205 255,197 265,177 282,160 298,147 314,132 327,117'],
[BR,'327,117 335,122 355,130 373,137'],
[RD,'373,137 382,160 392,213 402,283 410,327 418,347 423,350'],
[BR,'423,350 428,340 433,327 443,320 455,313 465,313 475,318'],
[DR,'475,318 483,333 493,353 500,358'],
[BR,'500,358 510,355 520,346 537,344'],
[DG,'537,344 547,333 555,325 560,320'],
[DR,'560,320 573,315 582,320 593,327 603,332 617,335 630,333 643,330 653,328'],
[RD,'653,328 667,327 677,330'],
[DR,'677,330 687,338 700,350 710,353 717,345'],
[GR,'717,345 725,330 737,320 747,310 760,297 772,291'],
[DR,'772,291 780,293 790,303 803,320 813,333 820,343 830,350 845,353 862,355'],
[RD,'862,355 869,367 881,387 897,397 905,413 918,437 930,463 942,478 952,483'],
[DR,'952,483 966,478'],
[DG,'966,478 981,473'],
[GR,'981,473 999,453 1020,437'],
[DR,'1020,437 1032,447 1048,457 1073,472 1085,465'],
['#ee2020','1085,465 1101,480 1117,492'],
[GR,'1117,492 1130,482 1138,473'],
[DR,'1138,473 1150,475 1166,490'],
[GR,'1166,490 1175,483 1187,475 1199,468 1215,447 1232,434 1248,433'],
[DR,'1248,433 1264,440 1277,443 1289,455'],
[RD,'1289,455 1301,477 1314,503 1322,513'],
[DR,'1322,513 1330,515 1342,513 1354,507'],
[DG,'1354,507 1367,497 1379,492'],
[BR,'1379,492 1395,497'],
[DG,'1395,497 1408,490 1424,488 1440,487 1457,475'],
[DR,'1457,475 1473,483 1483,488'],
[GR,'1483,488 1493,477 1501,463 1518,455']
].forEach(function(s){E(g('fast'),'polyline',{points:s[1],stroke:s[0],'stroke-width':s[0]==RD?4.6:4})});
/* candles */
var C={y:'#ffff00',s:'#1fb2ee',g:'#6a7f6a',r:'#ff2020',n:'#1a2fb0',m:'#ff00ff',p:'#dd5090',b:'#7a4040',l:'#10e010',c:'#00ffff',o:'#ff9a1a',k:'#000',h:'#98b050'};
var D=('y318-330 y313-333 y318-336 s300-334 s276-295 g265-277 r234-265 r215-234 r194-215 r195-204 y204-237 s211-237 y211-217 k217-218 y217-227 s222-227 s208-222 g175-208 r169-175 y169-187 s168-187 y168-183 s175-183 y175-218 y218-232 r232-248 s225-248 y226-245 s242-245 m243-262 r262-264 n237-264 y237-249 m249-257 n214-257 g192-215 r192-203 k194-195 g177-194 r177-192 g174-192 g147-174 r147-151 r148-150 k148-149 s145-148 g131-146 r131-141 s127-141 r117-127 y117-122 s108-122 g91-108 r91-103 y103-138 s135-137 k135-136 y136-138 k137-138 k136-137 s135-143 o135-138 m138-222 b222-236 b236-319 b319-357 b356-390 '+
'l387-396 b398-407 l404-407 l383-404 c316-383 s302-316 c289-302 o287-323 o303-323 c302-323 k303-304 o302-315 o317-325 b325-363 k363-364 l359-363 b357-395 l375-395 c339-375 o338-356 c338-356 c321-338 o321-344 k344-345 c323-345 s307-323 p310-323 l289-323 p289-302 p302-323 s304-323 p304-322 p313-344 l320-345 p321-338 l338-347 n335-348 s328-335 s323-328 s310-323 y312-353 h338-353 o338-340 s330-340 s317-330 k317-318 y317-323 s312-323 y304-330 m330-364 k364-365 n346-364 m346-363 k362-363 k362-363 n348-363 s315-347 r314-322 g306-322 g297-306 r297-302 g288-302 r289-292 g282-292 r282-287 g270-287 r270-282 y282-296 y296-313 m313-324 p325-343 k343-344 '+
'b344-369 l352-368 b353-382 l355-382 o355-358 c340-358 o340-342 o342-356 o355-366 c353-366 b350-369 b370-385 b385-409 b409-425 l403-424 l392-403 o392-397 b397-454 l454-459 b459-463 b462-470 l473-506 l493-507 b493-502 l489-502 b489-499 l491-500 c473-491 o473-476 c468-475 c459-470 o459-472 c450-464 o452-456 c444-455 k444-445 n412-445 m412-433 n420-433 m419-432 o432-455 o456-459 o462-464 o464-472 c468-472 o468-481 k480-481 k480-481 c464-481 c457-464 o457-468 k468-469 b468-487 l484-488 b484-511 k510-511 c504-511 c473-504 k473-474 n457-474 r457-459 m461-478 b481-498 l490-498 b490-502 c499-502 n465-499 s453-465 y453-473 k473-474 s453-473 g437-453 k436-437 g422-436 r422-432 k432-433 g410-430 r410-429 s425-429 y427-433 y434-447 s437-447 y437-455 s445-455 y444-448 r443-449 r449-462 m462-490 k489-490 b488-510 k510-511 b509-537 l537-558 l543-559 c515-543 k515-516 s503-513 m503-516 n502-517 s492-502 y492-497 s484-497 s477-484 y477-485 m485-508 y508-510 n488-510 s483-488 y483-485 y485-488 k488-489 y488-494 s483-494 y483-486 g477-487 g463-477 g452-463 r452-474 y474-483 y483-493 r490-500 s490-505 s473-490 g453-473 g447-453 g434-447 r434-459 s445-459 k444-445').split(' ');
var H={8:171,18:152,35:177,41:135,49:98,52:80,53:74,54:97,60:122,62:128,74:273,75:284,78:282,156:372,175:405,177:402,198:445,215:398,243:462,256:447,264:432},
L={10:252,29:273,64:335,66:405,67:445,68:418,69:437,71:388,83:411,84:412,99:356,117:381,121:382,160:528,163:520,164:512,196:520,201:547,203:515,231:599,232:570,233:560,259:513,243:512};
var c=g('cnd');
D.forEach(function(t,i){var k=t[0],v=t.slice(1).split('-'),a=+v[0],b=+v[1],x=X(i);
var hi=H[i]||a-(3+(i*7)%8),lo=L[i]||b+(3+(i*11)%9);
E(c,'line',{x1:x,x2:x,y1:hi,y2:lo,stroke:'#000','stroke-width':1});
if(b-a<2)E(c,'rect',{x:x-2.2,y:a,width:4.4,height:1.4,fill:'#000'});
else E(c,'rect',{x:x-2.1,y:a+.5,width:4.2,height:b-a,fill:C[k],stroke:'#000','stroke-width':1});
});
/* sistema */
var s=g('sys');
[[637,'#000','none'],[662,'#000','none'],[734,'#000','none'],[759,'#000','none'],[698,'#1212d0','5 4']].forEach(function(l){E(s,'line',{x1:28,x2:1519,y1:l[0],y2:l[0],stroke:l[1],'stroke-width':l[0]==698?2:1.2,'stroke-dasharray':l[2]})});
var T=P('28,682 45,677 55,670 61,647 70,643 78,645 88,655 100,659 118,660 126,652 135,646 151,648 161,655 171,672 185,673 201,682 218,679 228,663 245,655 261,643 295,642 328,642 345,658 368,660 378,673 388,710 396,743 408,747 421,743 441,710 461,713 475,717 495,733 508,730 528,723 563,712 600,722 640,722 669,716 689,730 705,730 734,713 775,697 795,710 807,713 824,703 840,698 860,717 881,750 893,738 922,750 950,742 975,730 1015,710 1048,728 1067,737 1085,728 1118,749 1138,728 1167,737 1187,723 1215,695 1238,690 1260,700 1277,700 1293,713 1316,738 1330,723 1342,703 1375,687 1395,697 1412,688 1440,688 1459,670 1477,692 1493,680 1501,662 1518,662');
var U=T.map(function(p){return[Math.min(p[0]+7,1519),p[1]+(p[1]<700?3:1)]});
for(var i=1;i<T.length;i++){var f=T[i][1]>T[i-1][1];E(s,'polygon',{points:S([T[i-1],T[i],U[i],U[i-1]]),fill:f?'#ecbfec':'#b8b8e8'})}
[[637,662,'#4aa84a',.45],[734,759,'#a04040',.45]].forEach(function(z){var id='c'+z[0];var cp=E(s,'clipPath',{id:id});E(cp,'rect',{x:28,y:z[0],width:1491,height:z[1]-z[0]});
E(s,'polygon',{points:S(z[0]==637?T.concat([[1519,662],[28,662]]):T.concat([[1519,734],[28,734]])),fill:z[2],'fill-opacity':z[3],'clip-path':'url(#'+id+')'})});
E(s,'polyline',{points:S(U),fill:'none',stroke:'#333','stroke-width':2.8,'stroke-dasharray':'5 4'});
var F=P('28,680 33,670 38,672 43,697 48,698 55,673 61,647 70,643 81,653 91,673 106,687 116,707 121,707 128,670 135,658 155,673 161,682 171,742 176,742 181,730 190,729 195,740 200,742 208,720 220,707 228,670 238,660 261,647 271,648 285,657 295,655 305,655 315,665 321,663 328,658 338,710 345,728 356,725 368,723 376,727 390,747 398,743 415,745 425,717 435,673 445,652 450,655 460,667 468,668 476,710 485,742 498,737 511,703 525,663 530,662 545,660 559,653 575,680 600,723 608,723 624,683 652,670 667,658 675,677 681,713 693,730 705,730 711,720 720,683 730,642 770,643 781,680 791,740 807,752 815,745 828,723 840,683 850,683 860,713 879,750 895,715 909,742 926,743 946,727 962,680 975,644 979,645 991,663 1007,652 1018,655 1026,680 1038,737 1060,743 1073,723 1083,680 1087,668 1093,680 1101,717 1118,747 1132,680 1138,662 1146,665 1150,680 1162,698 1175,698 1179,680 1183,657 1205,643 1215,650 1232,673 1244,680 1252,713 1264,738 1281,725 1289,733 1301,736 1318,737 1330,680 1338,680 1346,657 1367,644 1375,657 1385,680 1393,713 1408,687 1428,680 1448,657 1457,660 1469,720 1475,732 1479,732 1489,680 1501,647 1510,657 1518,662');
E(s,'polyline',{points:S(F.map(function(p){return[Math.min(p[0]+2,1519),p[1]+1]})),fill:'none',stroke:'#557','stroke-width':1,'stroke-dasharray':'3 2'});
for(i=1;i<F.length;i++){var f2=F[i][1]>F[i-1][1];E(s,'line',{x1:F[i-1][0],y1:F[i-1][1],x2:F[i][0],y2:F[i][1],stroke:f2?'#ee2a2a':'#000','stroke-width':f2?2:1.8,'stroke-linecap':'round'})}
for(i=1;i<T.length;i++){var f3=T[i][1]>T[i-1][1];E(s,'line',{x1:T[i-1][0],y1:T[i-1][1],x2:T[i][0],y2:T[i][1],stroke:f3?'#f00':'#0a0aa0','stroke-width':3.8,'stroke-linecap':'round'})}
function tri(p,x,y,d,w,h,col){E(p,'polygon',{points:d?[x-w/2,y-h/2,x+w/2,y-h/2,x,y+h/2].join(' '):[x-w/2,y+h/2,x+w/2,y+h/2,x,y-h/2].join(' '),fill:col})}
'37,672 71,643 140,658 161,680 194,733 238,660 271,647 293,653 305,653 327,657 356,723 377,725 400,742 450,654 466,667 560,657 533,663 608,722 628,685 672,663 734,644 744,644 773,653 848,678 978,647 1011,657 1089,672 1145,665 1190,658 1212,644 1235,662 705,726 900,718 922,742 1056,739 1273,729 1283,725 1313,740 1410,688 1420,688 1368,646 1455,659 1506,650'.split(' ').forEach(function(v){var a=v.split(',');tri(s,+a[0],+a[1],1,11,10,'#a00000')});
'49,698 121,706 155,673 177,742 205,736 244,661 289,655 299,654 321,662 349,726 367,724 395,745 416,744 461,666 489,742 544,665 599,719 644,710 693,727 711,727 811,750 884,748 918,743 929,743 1051,741 1073,734 1124,731 1173,695 1268,733 1279,727 1306,737 1318,743 1401,708 1430,684 1484,722 740,645 755,647 765,648 996,662 1200,658 1228,664'.split(' ').forEach(function(v){var a=v.split(',');tri(s,+a[0],+a[1],0,11,10,'#0000b0')});
/* willy */
var w=g('wil');
var WC={l:'#bfbff0',r:'#ffaaaa',d:'#b86a6a',g:'#6cbf6c'};
function st(str,off,map,p,y,h){str.split(' ').forEach(function(t){var k=t[0],v=t.slice(1).split('-');var x1=off+v[0]/2.45,x2=off+v[1]/2.45;E(p,'rect',{x:x1,y:y,width:x2-x1,height:h,fill:map[k]})})}
st('l113-153 l220-235 l278-318 l345-360 l373-387 l425-440 l575-605 l617-644 l686-713 l725-740 l768-795 l822-835 l862-876 l889-903 r917-987 r1001-1014 r1080-1110 r1135-1176 r1203-1218 r1245-1258 r1285-1298 r1340-1355 r1368-1394 r1410-1436 r1448-1463 l1490-1530 l1543-1568 d468-483 d522-536 d917-931 g496-510 g537-549 g1476-1490',0,WC,w,765,64);
st('l0-32 l60-73 l182-196 l210-236 l250-265 l277-291 l305-318 d87-100 d127-140 d358-372 d904-918 d932-946 d1231-1245 g114-127 g168-182 g890-904 g918-932 g1205-1218 g1298-1312 r155-168 r372-413 r426-440 r453-467 r480-521 r534-590 r617-644 r657-685 r712-726 r739-753 r781-795 r821-835 r849-862 r945-999 r1012-1040 r1080-1094 r1108-1122 r1135-1149 r1190-1205 r1245-1258 r1272-1285 l1312-1326 l1340-1408 l1421-1448 l1462-1476 l1503-1517 l1530-1544',640,WC,w,765,64);
st('d24-39 d162-176 d257-271 r51-65 r78-92 r271-284 g147-162 g176-190 g284-298 l190-202 l216-243 l298-310 l365-380 l392-434 l488-556 l569-597',1277,WC,w,765,64);
[[770,'#000','5 4',1.2],[827,'#000','5 4',1.2],[784,'#1212b0','none',1.8],[798,'#1212d0','5 4',2],[812,'#e01010','none',1.8]].forEach(function(l){E(w,'line',{x1:28,x2:1519,y1:l[0],y2:l[0],stroke:l[1],'stroke-width':l[3],'stroke-dasharray':l[2]})});
var W=P('28,783 41,787 45,782 60,785 88,781 102,779 118,780 127,770 135,777 143,773 153,777 161,787 171,792 182,793 190,802 208,800 216,795 224,785 235,783 245,778 251,782 261,770 278,775 294,775 310,778 322,770 331,787 347,788 369,787 373,800 378,812 388,817 400,823 408,818 420,818 427,807 437,803 449,808 457,805 469,807 478,813 494,818 502,812 518,808 531,812 547,805 559,802 576,803 584,810 596,807 608,790 620,785 629,797 640,797 650,787 660,788 664,785 677,805 693,803 709,802 715,787 724,788 732,775 742,777 756,770 767,770 783,795 797,808 805,820 815,812 818,822 832,803 840,802 850,813 856,810 877,825 889,813 901,825 918,825 934,820 946,820 967,813 987,810 1007,795 1022,795 1032,807 1048,810 1064,813 1073,805 1085,805 1097,810 1107,820 1115,820 1124,802 1138,795 1150,808 1164,808 1177,788 1187,798 1199,783 1211,777 1220,782 1228,773 1236,780 1244,779 1252,785 1260,788 1277,787 1283,797 1293,803 1312,822 1324,812 1332,797 1344,797 1359,795 1373,790 1383,798 1393,793 1422,795 1434,793 1450,782 1473,793 1485,782 1501,770 1508,780 1518,775');
E(w,'polygon',{points:S(W.concat([[1518,784],[28,784]])),fill:'#00a000','fill-opacity':.32,'clip-path':'url(#cg)'});
E(w,'polygon',{points:S(W.concat([[1518,812],[28,812]])),fill:'#900000','fill-opacity':.35,'clip-path':'url(#cr)'});
for(i=1;i<W.length;i++){var ym=(W[i][1]+W[i-1][1])/2,col=ym<784?'#00b400':ym>812?'#990000':W[i][1]>W[i-1][1]?'#ff9a1a':'#1020d0';E(w,'line',{x1:W[i-1][0],y1:W[i-1][1],x2:W[i][0],y2:W[i][1],stroke:col,'stroke-width':3.8,'stroke-linecap':'round'})}
'189,797 210,797 371,797 673,797 689,797 784,797 1007,797 1018,797 1140,797 1284,797 1339,797 1379,797 1312,817'.split(' ').forEach(function(v){var a=v.split(',');tri(w,+a[0],+a[1],1,12,11,'#a00000')});
'200,798 216,798 600,803 683,801 705,798 1000,798 1011,798 1129,798 1169,798 1331,798 1346,798 1391,798'.split(' ').forEach(function(v){var a=v.split(',');tri(w,+a[0],+a[1],0,12,11,'#0000b0')});
/* awesome */
var a=g('awe');
var A=P('28,855 41,855 49,862 61,855 78,848 98,848 122,855 135,849 151,853 163,865 176,873 200,879 214,873 233,862 253,855 265,850 286,851 327,852 337,862 351,867 373,868 384,890 398,917 408,922 420,918 433,887 445,872 465,865 498,878 514,868 539,863 561,855 580,860 604,868 640,868 664,863 681,872 705,873 722,862 742,855 773,853 791,870 807,878 824,879 840,868 860,870 881,882 926,890 950,882 971,868 991,862 1011,853 1028,860 1048,868 1069,873 1089,868 1113,877 1138,862 1150,865 1171,870 1183,860 1211,853 1240,858 1280,865 1297,877 1322,888 1338,875 1375,860 1387,865 1408,860 1452,857 1481,869 1501,857 1518,857');
var B=P('28,852 41,852 65,850 155,845 180,857 214,870 241,862 265,855 302,852 327,847 359,857 378,863 398,900 420,913 433,897 453,887 482,885 502,891 527,875 571,858 600,865 624,870 640,868 667,863 705,873 742,860 773,853 807,867 832,873 860,870 889,880 926,892 944,893 987,877 1028,862 1064,870 1089,867 1122,872 1146,867 1171,872 1224,854 1280,862 1326,882 1342,882 1383,868 1399,869 1424,863 1448,862 1485,863 1514,857 1518,857');
for(i=0;i<268;i++){var x=X(i),ya=I(A,x),yb=I(B,x),ya0=I(A,x-5),yb0=I(B,x-5);
E(a,'line',{x1:x,x2:x,y1:ya,y2:yb,stroke:yb>yb0?'#ffd0d0':'#c8f5c8','stroke-width':2});
var up=ya<ya0,pos=ya<865;
E(a,'line',{x1:x,x2:x,y1:865,y2:ya,stroke:pos?(up?'#1020e8':'#ff00e0'):(up?'#008a8a':'#f01010'),'stroke-width':2.2})}
E(a,'rect',{x:28,y:864,width:1491,height:2,fill:'#1212ee'});
function seg(P2,fn){for(var i=1;i<P2.length;i++)E(a,'line',{x1:P2[i-1][0],y1:P2[i-1][1],x2:P2[i][0],y2:P2[i][1],stroke:fn(P2[i][1]>P2[i-1][1]),'stroke-width':4,'stroke-linecap':'round'})}
seg(A,function(d){return d?'#a000a8':'#101040'});
seg(B,function(d){return d?'#ff9a1a':'#70f070'});
'65,849 228,865 422,913 617,867 650,867 717,867 840,872 890,878 918,886 1079,869 1124,873 1162,870 1335,879 1491,863'.split(' ').forEach(function(v){var q=v.split(',');tri(a,+q[0],+q[1],0,11,10,'#00e8f0')});
'304,851 573,859 634,870 667,863 778,857 845,871 905,884 1034,863 1090,868 1156,869 1239,857 1463,862 1513,859'.split(' ').forEach(function(v){var q=v.split(',');tri(a,+q[0],+q[1],1,11,10,'#f0f000')});
/* barra */
var b=g('bar');var BC={g:'#3cf53c',y:'#ffff80',b:'#b0eaff',p:'#6868c8',d:'#6a0a0a'};
var RG=[];
function bs(str,off){str.split(' ').forEach(function(t){var k=t[0],v=t.slice(1).split('-'),x1=off+v[0]/2.45,x2=off+v[1]/2.45;E(b,'rect',{x:x1,y:925,width:x2-x1+.4,height:70,fill:BC[k]});RG.push([x1,x2,k])})}
bs('g70-127 d127-140 p140-235 b235-304 p304-318 b318-332 y332-345 g345-373 y373-387 d387-399 y399-441 g441-454 y454-468 g468-481 y481-495 g495-510 y510-537 g537-563 d563-578 y578-632 g632-644 y644-755 g755-862 y862-918 g918-931 d931-945 p945-1013 b1013-1040 p1040-1053 b1053-1298 y1298-1394 g1394-1409 y1409-1423 g1423-1463 y1463-1531 g1531-1546 y1546-1568',0);
bs('y0-73 g73-196 y196-345 g345-358 y358-399 g399-483 y483-563 g563-618 y618-632 d632-644 p644-671 b671-686 p686-700 b700-755 y755-835 g835-850 y850-892 g892-958 y958-1014 g1014-1027 y1027-1053 g1053-1080 y1080-1110 g1110-1122 y1122-1164 g1164-1191 y1191-1205 g1205-1218 y1218-1245 g1245-1286 y1286-1298 g1298-1313 y1313-1328 g1328-1340 y1340-1568',640);
bs('y0-24 g24-108 d108-120 p120-147 b147-203 y203-284 g284-299 y299-407 g407-461 y461-475 g475-544 y544-556 g556-583 y583-598',1277);
var BT=P('28,977 41,973 49,970 57,970 69,967 84,964 93,962 102,964 114,967 124,970 135,971 155,970 163,971 180,971 204,971 220,973 233,971 245,973 261,975 286,978 306,982 308,981 327,977 352,973 355,975 373,978 378,967 386,953 394,942 404,930 412,928 416,930 441,937 469,952 490,962 531,969 571,977 592,974 596,973 612,980 625,981 640,982 669,989 673,987 718,982 722,983 779,993 781,991 799,991 832,977 836,977 869,981 871,979 893,975 897,968 905,966 913,967 922,965 946,970 981,979 1003,980 1028,978 1032,978 1052,981 1089,980 1146,983 1150,975 1166,973 1187,970 1191,973 1232,980 1277,984 1285,982 1318,973 1326,965 1338,965 1359,973 1391,978 1397,980 1440,988 1442,987 1461,982 1497,980 1503,978 1516,978 1518,979');
for(i=0;i<268;i++){var x=X(i),k='y';for(var j=0;j<RG.length;j++)if(x>=RG[j][0]&&x<RG[j][1]){k=RG[j][2];break}
var t=I(BT,x),blue=k=='g'||k=='d'||k=='p';
E(b,'rect',{x:x-2.8,y:t,width:5.57,height:995-t,fill:blue?'#1f3cb8':'#d83a20','fill-opacity':.8,stroke:blue?'#5a70c8':'#c88a60','stroke-width':.9})}
E(b,'line',{x1:28,x2:1519,y1:972,y2:972,stroke:'#000','stroke-width':1.2});
})();
</script>
</body></html>
